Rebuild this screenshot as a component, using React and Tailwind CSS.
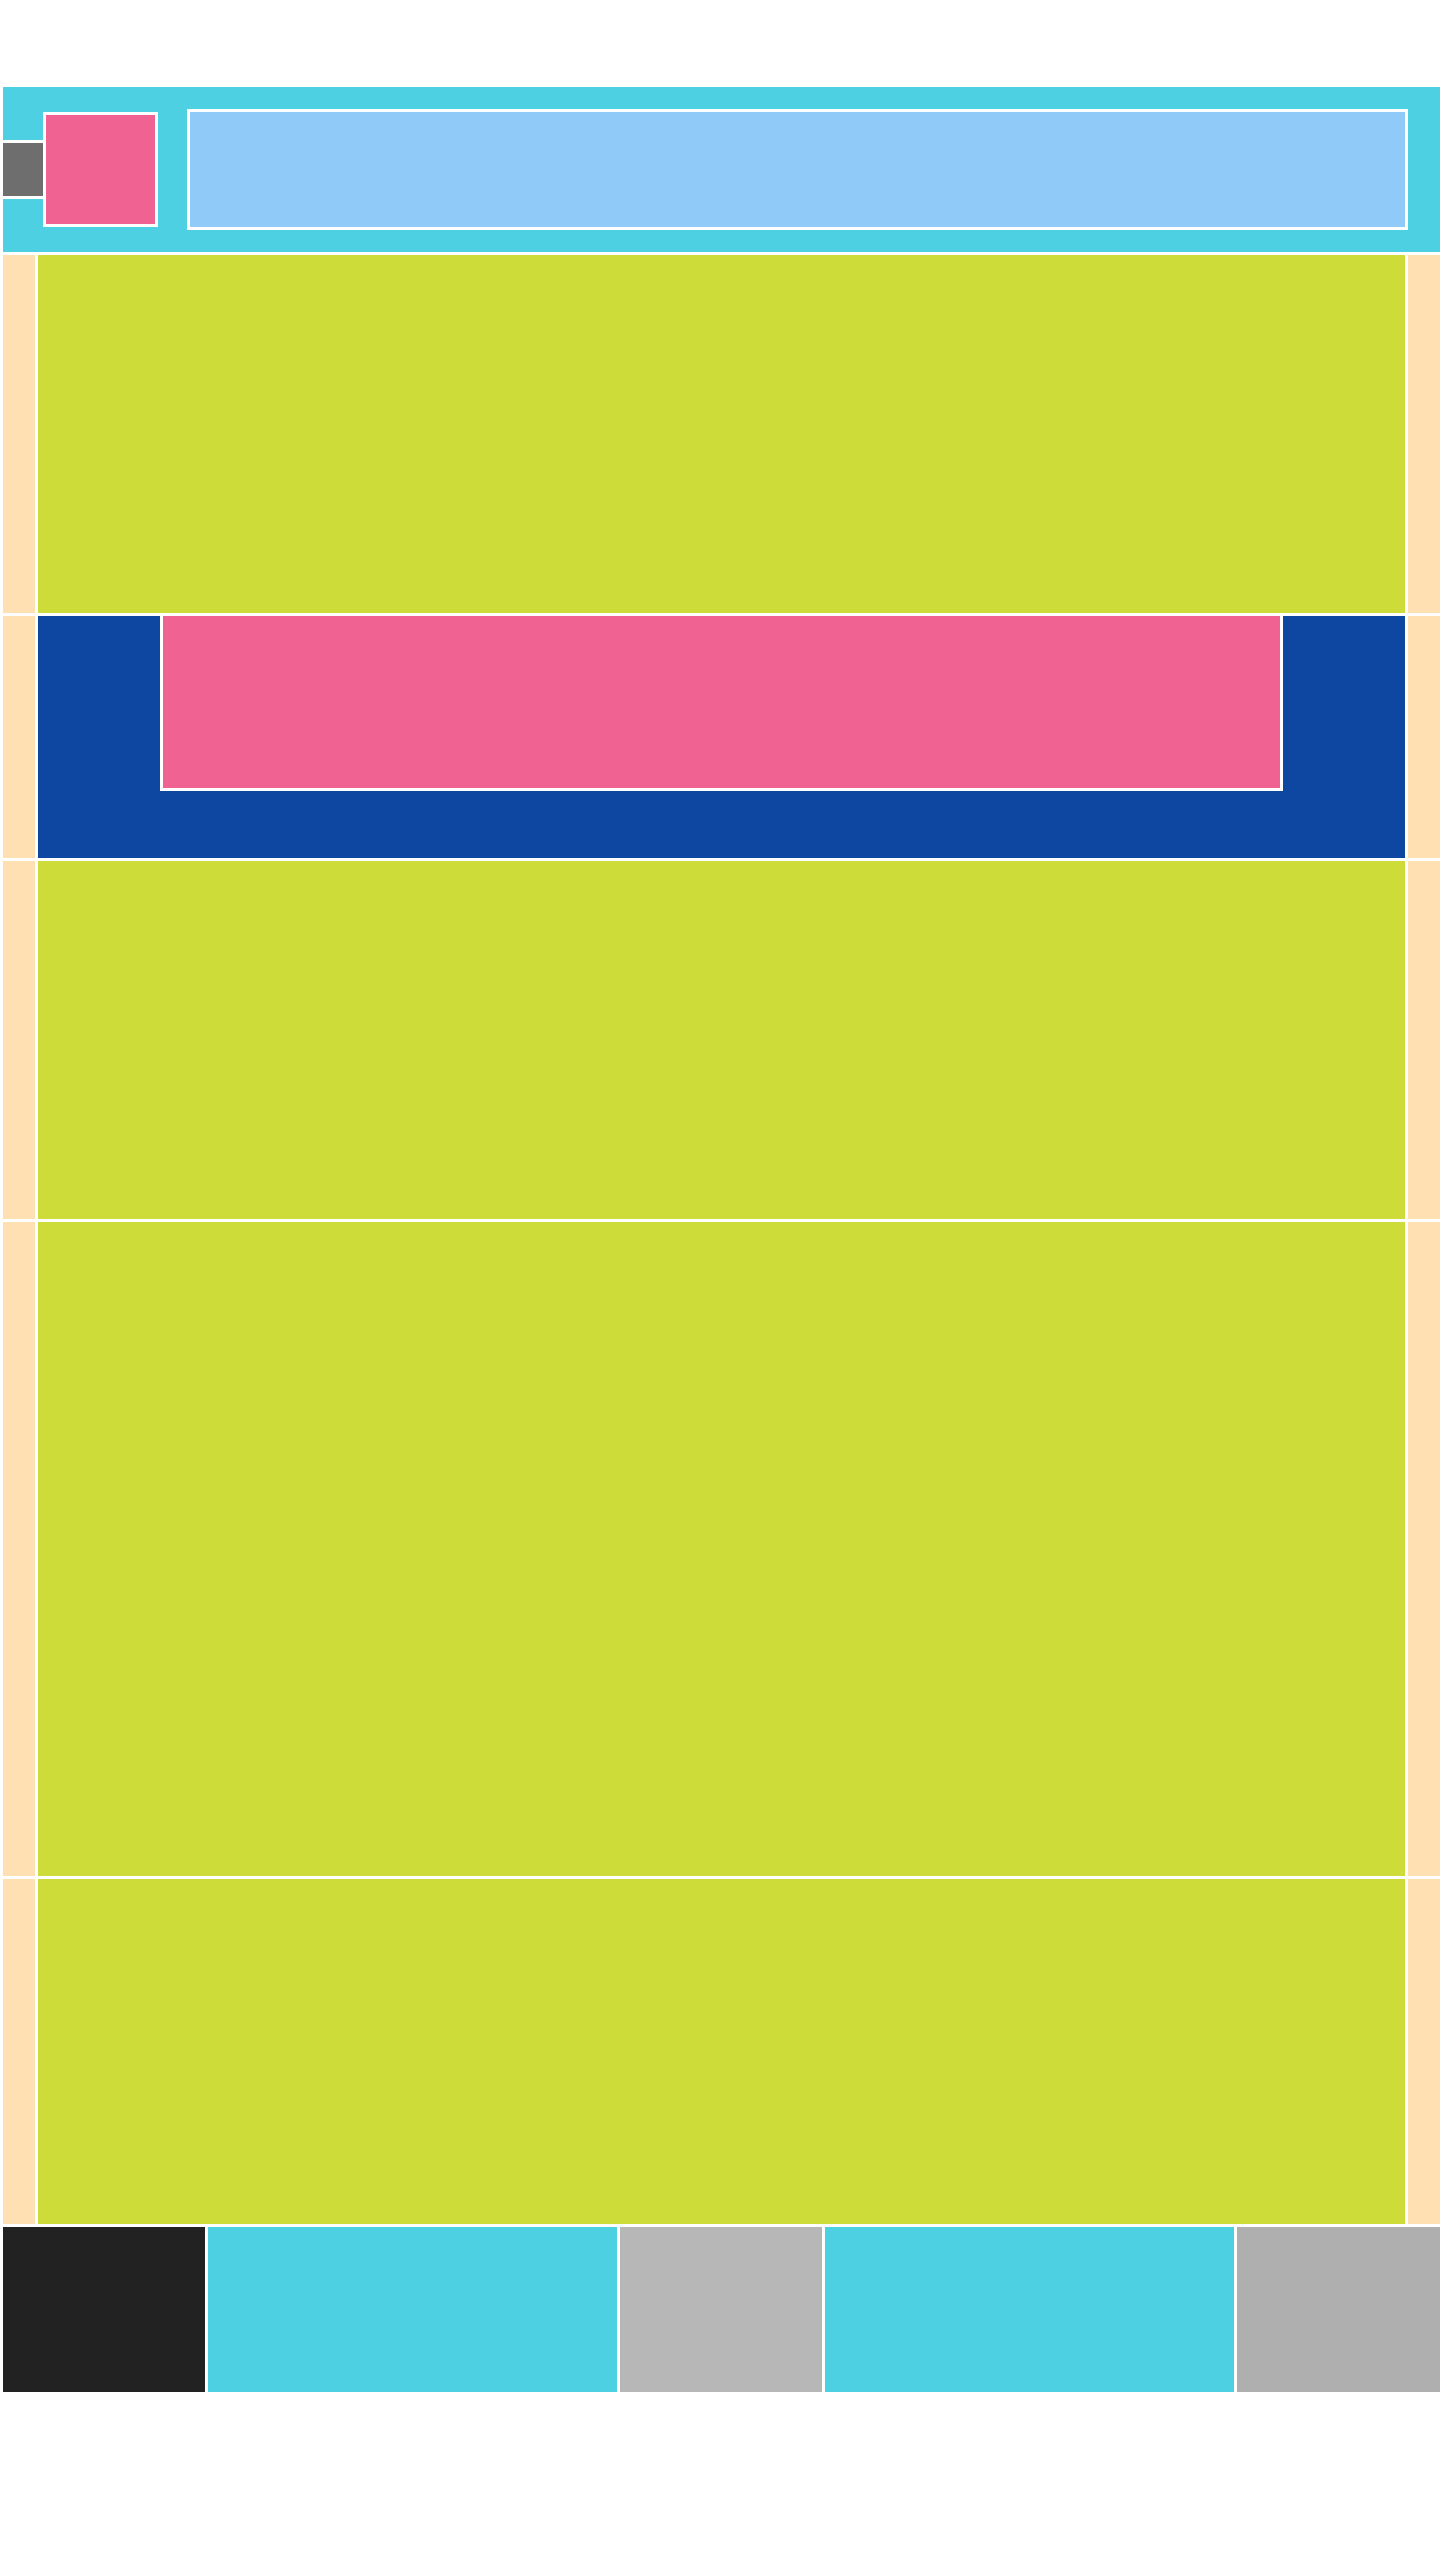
export default function App() {
  // body rows: heights taken from the reference
  const rows = [
    { h: 'h-[358px]', kind: 'lime' },
    { h: 'h-[242px]', kind: 'blue' },
    { h: 'h-[358px]', kind: 'lime' },
    { h: 'h-[654px]', kind: 'lime' },
    { h: 'h-[345px]', kind: 'lime' },
  ];

  return (
    <div className="min-h-[2560px] bg-white pt-[87px] pl-[3px] font-['Liberation_Sans',sans-serif]">
      {/* header */}
      <div className="flex h-[165px] items-center bg-[#4dd0e1] pr-[32px]">
        <div className="h-[59px] w-[40px] border-y-[3px] border-white bg-[#6e6e6e]"></div>
        <div className="h-[115px] w-[115px] border-[3px] border-white bg-[#f06292]"></div>
        <div className="ml-[29px] h-[121px] flex-1 border-[3px] border-white bg-[#90caf9]"></div>
      </div>

      {/* rows */}
      <div className="mt-[3px] flex flex-col gap-[3px]">
        {rows.map((row, i) => (
          <div key={i} className={`flex gap-[3px] ${row.h}`}>
            <div className="w-[32px] bg-[#ffe0b2]"></div>
            {row.kind === 'blue' ? (
              <div className="flex-1 bg-[#0d47a1]">
                <div className="mx-auto h-[175px] w-[1123px] border-x-[3px] border-b-[3px] border-white bg-[#f06292]"></div>
              </div>
            ) : (
              <div className="flex-1 bg-[#cddc39]"></div>
            )}
            <div className="w-[32px] bg-[#ffe0b2]"></div>
          </div>
        ))}
      </div>

      {/* footer */}
      <div className="mt-[3px] grid h-[165px] grid-cols-[202px_409px_202px_409px_1fr] gap-[3px]">
        <div className="bg-[#222222]"></div>
        <div className="bg-[#4dd0e1]"></div>
        <div className="bg-[#b7b7b7]"></div>
        <div className="bg-[#4dd0e1]"></div>
        <div className="bg-[#afafaf]"></div>
      </div>
    </div>
  );
}
